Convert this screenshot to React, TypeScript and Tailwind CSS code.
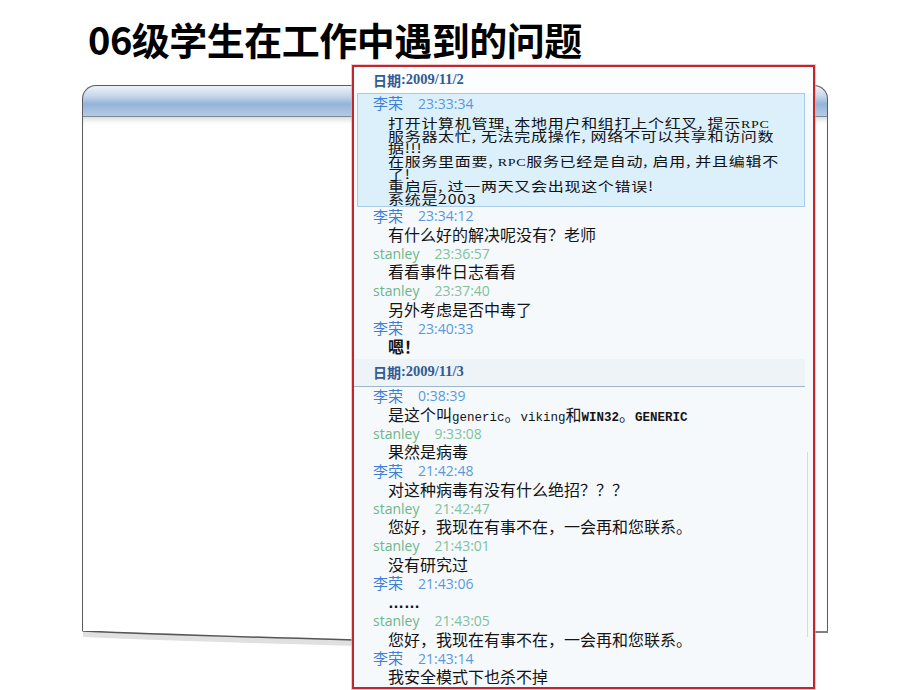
const cjk = "font-['Noto_Sans_CJK_SC',sans-serif]";
const mono = "font-['Liberation_Mono',monospace] text-[12.5px]";

type Msg = { who: string; t: string; m: React.ReactNode };

const day1: Msg[] = [
  { who: "李荣", t: "23:34:12", m: "有什么好的解决呢没有？老师" },
  { who: "stanley", t: "23:36:57", m: "看看事件日志看看" },
  { who: "stanley", t: "23:37:40", m: "另外考虑是否中毒了" },
  { who: "李荣", t: "23:40:33", m: <span className="font-bold">嗯！</span> },
];

const day2: Msg[] = [
  {
    who: "李荣",
    t: "0:38:39",
    m: (
      <>
        是这个叫<span className={mono}>generic</span>。<span className={mono}>viking</span>和
        <span className={`${mono} font-bold`}>WIN32</span>。<span className={`${mono} font-bold`}>GENERIC</span>
      </>
    ),
  },
  { who: "stanley", t: "9:33:08", m: "果然是病毒" },
  { who: "李荣", t: "21:42:48", m: "对这种病毒有没有什么绝招？？？" },
  { who: "stanley", t: "21:42:47", m: "您好，我现在有事不在，一会再和您联系。" },
  { who: "stanley", t: "21:43:01", m: "没有研究过" },
  {
    who: "李荣",
    t: "21:43:06",
    m: <span className="font-['Liberation_Sans',sans-serif] font-bold">……</span>,
  },
  { who: "stanley", t: "21:43:05", m: "您好，我现在有事不在，一会再和您联系。" },
  { who: "李荣", t: "21:43:14", m: "我安全模式下也杀不掉" },
];

function NameLine({ who, t }: { who: string; t: string }) {
  const li = who === "李荣";
  return (
    <div className="flex h-[18px] items-center whitespace-nowrap">
      <span
        className={
          li
            ? `${cjk} text-[15px] text-[#3f7fd6]`
            : "font-['Open_Sans',sans-serif] text-[14px] text-[#6db68a]"
        }
      >
        {who}
      </span>
      <span
        className={
          "ml-[15px] font-['Open_Sans',sans-serif] text-[14px] " +
          (li ? "text-[#5a98dc]" : "text-[#7fc29b]")
        }
      >
        {t}
      </span>
    </div>
  );
}

function Row({ msg }: { msg: Msg }) {
  return (
    <div className="pl-[19px]">
      <NameLine who={msg.who} t={msg.t} />
      <div className={`h-[19.5px] whitespace-nowrap pl-[15px] text-[16px] leading-[19.5px] text-[#141414] ${cjk}`}>
        {msg.m}
      </div>
    </div>
  );
}

function DateRow({ d, className }: { d: string; className: string }) {
  return (
    <div className={`flex items-center pl-[19px] font-bold text-[#325b93] ${className}`}>
      <span className={`${cjk} text-[14px]`}>日期</span>
      <span className="font-['Liberation_Serif',serif] text-[14.5px]">:{d}</span>
    </div>
  );
}

const rpc = <span className="font-['Liberation_Serif',serif] text-[14px]">RPC</span>;

// the pasted log squeezes these lines together, so the glyphs are flattened a bit
function Line({ children }: { children: React.ReactNode }) {
  return (
    <div className="h-[12.7px] scale-y-[0.8] whitespace-nowrap leading-[12.7px] tracking-[0.7px]">
      {children}
    </div>
  );
}

export default function App() {
  return (
    <div className="relative h-[690px] w-[920px] overflow-hidden bg-white">
      {/* title */}
      <div className="h-[85px] pl-[88px] pt-[20px]">
        <h1 className="font-['Liberation_Sans_Narrow','Noto_Sans_CJK_SC',sans-serif] text-[38px] font-bold leading-none tracking-[-0.5px] text-black">
          06级学生在工作中遇到的问题
        </h1>
      </div>

      {/* back frame */}
      <div className="ml-[82px] w-[746px]">
        <div className="h-[32px] rounded-t-[14px] border-x-[1.5px] border-t-[1.5px] border-b border-[#5c5c5c] border-b-[#7d8795] bg-[linear-gradient(to_bottom,#eef3f9_0%,#c3d5ea_35%,#94b3d8_60%,#b4cae4_100%)]" />
        <div className="h-[514px] border-x-[1.5px] border-[#5c5c5c] bg-white shadow-[inset_0_6px_6px_-4px_rgba(0,0,0,0.18)]" />
        <svg width="746" height="22" viewBox="0 0 746 22" className="block">
          <path d="M1 3 C 90 7, 200 10, 272 12" fill="none" stroke="rgba(0,0,0,0.12)" strokeWidth="6" />
          <path d="M0.5 0 C 90 4, 200 7, 272 9" fill="none" stroke="#555" strokeWidth="1.5" />
          <path d="M720 1 L 746 1" fill="none" stroke="#555" strokeWidth="1.5" />
        </svg>
      </div>

      {/* chat log screenshot lying over the frame */}
      <div className="absolute left-[352px] top-[65px] h-[624px] w-[463px] overflow-hidden border-2 border-[#c2262d] bg-[#f6f9fc] shadow-[0_0_0_1px_rgba(232,160,170,0.6)]">
        <div className="flex h-full">
          <div className="flex-1">
            <DateRow d="2009/11/2" className="h-[26px] bg-[#fbfdfe]" />
            <div className="ml-[3px] mr-[8px] border border-[#a9cbe6] bg-[#dcf0fc] pb-[1px] pl-[15px]">
              <NameLine who="李荣" t="23:33:34" />
              <div className={`mt-[4px] pl-[15px] text-[16px] text-[#111] ${cjk}`}>
                <Line>打开计算机管理, 本地用户和组打上个红叉, 提示{rpc}</Line>
                <Line>服务器太忙, 无法完成操作, 网络不可以共享和访问数</Line>
                <Line>据!!!</Line>
                <Line>在服务里面要, {rpc}服务已经是自动, 启用, 并且编辑不</Line>
                <Line>了!</Line>
                <Line>重启后, 过一两天又会出现这个错误!</Line>
                <Line>系统是2003</Line>
              </div>
            </div>
            {day1.map((m, i) => (
              <Row key={i} msg={m} />
            ))}
            <DateRow d="2009/11/3" className="mt-[2px] mr-[8px] h-[28px] border-b border-[#9fb5ca] bg-[#eef3f8]" />
            {day2.map((m, i) => (
              <Row key={i} msg={m} />
            ))}
          </div>
          <div className="w-0 pt-[385px]">
            <div className="-ml-[6px] h-[185px] w-px bg-[#d3dbe3]" />
          </div>
        </div>
      </div>
    </div>
  );
}
